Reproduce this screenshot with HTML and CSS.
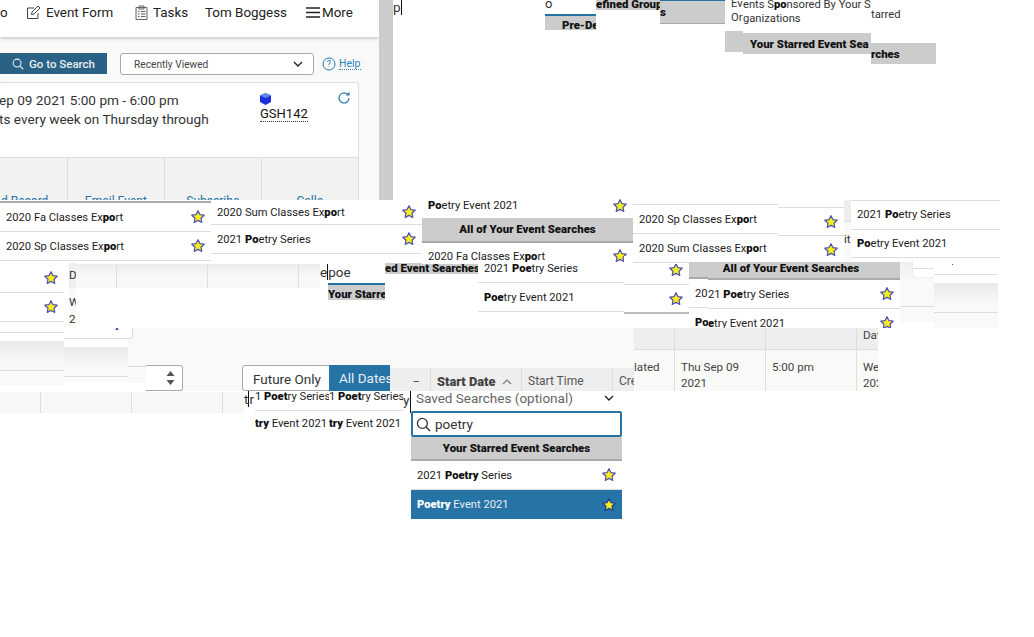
FILE: index.html
```html
<!DOCTYPE html>
<html lang="en">
<head>
<meta charset="utf-8">
<title>Event search</title>
<link rel="stylesheet" href="styles.css">
</head>
<body>
<svg class="defs" width="0" height="0" aria-hidden="true">
  <symbol id="star" viewBox="0 0 14 14"><polygon class="star-shape" points="7,0.7 8.9,4.6 13.2,5.2 10,8.2 10.8,12.5 7,10.4 3.2,12.5 4,8.2 0.8,5.2 5.1,4.6"/></symbol>
  <symbol id="search" viewBox="0 0 16 16"><circle cx="6.8" cy="6.8" r="5.3" fill="none" stroke="currentColor" stroke-width="1.4"/><path d="M10.7 10.7L15 15" stroke="currentColor" stroke-width="1.5" fill="none"/></symbol>
  <symbol id="chev" viewBox="0 0 10 6"><path d="M1 1l4 4 4-4" fill="none" stroke="currentColor" stroke-width="1.4"/></symbol>
</svg>

<div class="frag f-main">
  <header class="topbar">
    <span class="nav nav-cut">o</span>
    <span class="nav nav-form">
      <svg class="ico-nav" viewBox="0 0 15 15"><path d="M12 8v5.500H1.500V3H8M5.500 9.500l.5-2.500L12 1l2 2-6 6z" fill="none" stroke="#444" stroke-width="1"/></svg>
      Event Form</span>
    <span class="nav nav-tasks">
      <svg class="ico-nav ico-task" viewBox="0 0 13 15"><path d="M1 2.500h11v12H1zM4 1h5v3H4z" fill="#f4f4f4" stroke="#666" stroke-width="1"/><path d="M3 6.500h1.500M6 6.500h4.500M3 9h1.500M6 9h4.500M3 11.500h1.500M6 11.500h4.500" stroke="#666" stroke-width="1"/></svg>
      Tasks</span>
    <span class="nav nav-user">Tom Boggess</span>
    <span class="nav nav-more">
      <svg class="ico-more" viewBox="0 0 14 11"><path d="M0 1h14M0 5.500h14M0 10h14" stroke="#222" stroke-width="1.400"/></svg>
      More</span>
  </header>
  <div class="toolbar">
    <button class="go-btn"><svg class="ico-go"><use href="#search"/></svg>Go to Search</button>
    <div class="recent"><span>Recently Viewed</span><svg class="ico-chev"><use href="#chev"/></svg></div>
    <svg class="ico-help" viewBox="0 0 14 14"><circle cx="7" cy="7" r="6" fill="none" stroke="#2673a5" stroke-width="1"/><text x="7" y="10.300" text-anchor="middle" class="help-q">?</text></svg>
    <a class="help">Help</a>
  </div>
  <section class="card">
    <div class="card-body">
      <div class="card-text">
        <div>ep 09 2021 5:00 pm - 6:00 pm</div>
        <div>ts every week on Thursday through</div>
      </div>
      <div class="card-loc">
        <svg class="ico-cube" viewBox="0 0 11 12"><path d="M5.500 0L11 2.500v6.500L5.500 12 0 9V2.500z" fill="#1a2fd6"/><path d="M0 2.500L5.500 5 11 2.500 5.500 0z" fill="#5d8cf0"/></svg>
        <span class="gsh">GSH142</span>
      </div>
      <svg class="ico-refresh" viewBox="0 0 14 14"><path d="M12 7a5 5 0 1 1-1.600-3.700" fill="none" stroke="#2673a5" stroke-width="1.200"/><path d="M12.500 0.800v3.700H8.800z" fill="#2673a5"/></svg>
    </div>
    <div class="card-foot">
      <div class="fc fc1"><span>d Record</span></div>
      <div class="fc fc2"><span>Email Event</span></div>
      <div class="fc fc3"><span>Subscribe</span></div>
      <div class="fc fc4"><span>Calle</span></div>
    </div>
  </section>
</div>
<div class="frag f-strip"></div>
<div class="frag f-p"><span class="caret-text">p</span></div>

<div class="frag f-t1"><div class="t-o">o</div><div class="t-head">Pre-De</div></div>
<div class="frag f-t2 gray-band"><b>efined Group</b></div>
<div class="frag f-t3 gray-band"><b>s</b></div>
<div class="frag f-t4"><div class="t4-a">ents S<b>po</b>nsored By Your St</div><div class="t4-b">ganizations</div></div>
<div class="frag f-t4c"><div class="t4-a">Ev</div><div class="t4-b">Or</div></div>
<div class="frag f-t5"></div>
<div class="frag f-t6 gray-band"><b>Your Starred Event Sea</b></div>
<div class="frag f-t7 gray-band"><b>rches</b></div>
<div class="frag f-t8">tarred</div>

<div class="frag f-table-mid"></div>

<div class="frag f-l3">
  <div class="row"><svg class="star"><use href="#star"/></svg></div>
  <div class="row"><svg class="star"><use href="#star"/></svg></div>
  <div class="row row-thin"></div>
</div>
<div class="frag f-lshade1"></div>
<div class="frag f-lshade2"></div>
<div class="frag f-da">Da</div>
<div class="frag f-we"><div>We</div><div>20</div></div>
<div class="frag f-tback"><div class="tb tb1"></div><div class="tb tb2"></div><div class="tb tb3"></div></div>
<div class="frag f-white1"></div>
<div class="frag f-menu-edge"></div>
<div class="frag f-tip"><svg class="star"><use href="#star"/></svg></div>

<div class="frag f-l1">
  <div class="row"><span>2020 Fa Classes Ex<b>po</b>rt</span><svg class="star"><use href="#star"/></svg></div>
  <div class="row"><span>2020 Sp Classes Ex<b>po</b>rt</span><svg class="star"><use href="#star"/></svg></div>
</div>
<div class="frag f-l2">
  <div class="row r-s"><span>2020 Sum Classes Ex<b>po</b>rt</span><svg class="star"><use href="#star"/></svg></div>
  <div class="row"><span>2021 <b>Po</b>etry Series</span><svg class="star"><use href="#star"/></svg></div>
</div>
<div class="frag f-epoe"><span class="caret-mid">e</span><span class="caret-bar">poe</span></div>
<div class="frag f-ys"><div class="head-strip"><b>Your Starre</b></div></div>
<div class="frag f-ed gray-band"><b>ed Event Searches</b></div>

<div class="frag f-l4">
  <div class="row r-s"><span><b>Po</b>etry Event 2021</span><svg class="star"><use href="#star"/></svg></div>
  <div class="list-head">All of Your Event Searches</div>
  <div class="row row-free"><span>2020 Fa Classes Ex<b>po</b>rt</span><svg class="star"><use href="#star"/></svg></div>
</div>
<div class="frag f-l5">
  <div class="row"><svg class="star"><use href="#star"/></svg></div>
  <div class="row"><svg class="star"><use href="#star"/></svg></div>
</div>
<div class="frag f-l6">
  <div class="row row-first"><span>2021 <b>Poe</b>try Series</span></div>
  <div class="row"><span><b>Poe</b>try Event 2021</span></div>
</div>
<div class="frag f-l7">
  <div class="row"><span>2020 Sp Classes Ex<b>po</b>rt</span></div>
  <div class="row"><span>2020 Sum Classes Ex<b>po</b>rt</span></div>
</div>
<div class="frag f-l8">
  <div class="row"><svg class="star"><use href="#star"/></svg></div>
  <div class="row"><svg class="star"><use href="#star"/></svg></div>
</div>
<div class="frag f-l9"><span class="it">it</span></div>
<div class="frag f-r-shade2"></div>
<div class="frag f-r-card"><div class="r-card-line"></div></div>
<div class="frag f-r-shade"></div>
<div class="frag f-l10"><span class="blue-dot"></span></div>
<div class="frag f-l11">
  <div class="row"><span>2021 <b>Po</b>etry Series</span></div>
  <div class="row"><span><b>Po</b>etry Event 2021</span></div>
</div>
<div class="frag f-l12">
  <div class="list-head head-a"></div>
  <div class="row"><span>20</span></div>
  <div class="row"><span><b>Po</b></span></div>
</div>
<div class="frag f-l13">
  <div class="list-head">All of Your Event Searches</div>
  <div class="row"><span>21 <b>Poe</b>try Series</span><svg class="star"><use href="#star"/></svg></div>
  <div class="row"><span><b>e</b>try Event 2021</span><svg class="star"><use href="#star"/></svg></div>
</div>

<div class="frag f-table-r">
  <div class="tr-head">
    <div class="c c0"></div><div class="c c1"></div><div class="c c2"></div><div class="c c3">Dat</div>
  </div>
  <div class="tr-row">
    <div class="c c0">lated</div><div class="c c1">Thu Sep 09<br>2021</div><div class="c c2">5:00 pm</div><div class="c c3">Wed<br>202</div>
  </div>
</div>
<div class="frag f-table-h">
  <div class="th th0">_</div><div class="th th1"><b>Start Date</b><svg class="ico-sort" viewBox="0 0 10 6"><path d="M1 5l4-4 4 4" fill="none" stroke="#888" stroke-width="1.400"/></svg></div><div class="th th2">Start Time</div><div class="th th3">Cre</div>
</div>
<div class="frag f-toggle"><div class="seg seg-off">Future Only</div><div class="seg seg-on">All Dates</div></div>
<div class="frag f-w2"></div>
<div class="frag f-select">
  <svg class="ico-ud" viewBox="0 0 10 16"><path d="M5 1l4 5H1zM5 15l4-5H1z" fill="#555"/></svg>
</div>
<div class="frag f-bottom-l"><div class="bc b1"></div><div class="bc b2"></div><div class="bc b3"></div></div>

<div class="frag f-ps1"><span class="caret-mid">t</span><span class="caret-bar">r</span></div>
<div class="frag f-ps2"><div class="ps-a">1 <b>Poet</b>ry Series</div><div class="ps-b"><b>try</b> Event 2021</div></div>
<div class="frag f-ps3"><div class="ps-a">1 <b>Poet</b>ry Series</div><div class="ps-b"><b>try</b> Event 2021</div></div>
<div class="frag f-ps4">y</div>

<div class="frag f-saved">
  <div class="saved-top"><span>Saved Searches (optional)</span><svg class="ico-chev"><use href="#chev"/></svg></div>
  <div class="saved-input"><svg class="ico-s"><use href="#search"/></svg><span>poetry</span></div>
  <div class="list-head head-tall">Your Starred Event Searches</div>
  <div class="row row-tall"><span>2021 <b>Poetry</b> Series</span><svg class="star"><use href="#star"/></svg></div>
  <div class="row row-tall row-sel"><span><b>Poetry</b> Event 2021</span><svg class="star"><use href="#star"/></svg></div>
</div>
</body>
</html>
```

FILE: styles.css
```css
* { box-sizing: border-box; }
html, body { margin: 0; padding: 0; width: 1034px; height: 637px; overflow: hidden; background: #fff; }
body { position: relative; font-family: Roboto, "Liberation Sans", sans-serif; color: #333; font-size: 12px; }
.defs { position: absolute; }
b { font-weight: 900; color: #111; }
.frag { position: absolute; overflow: hidden; }
.star-shape { fill: #f7ee1a; stroke: var(--star-stroke, #5050b8); stroke-width: 1.2; stroke-linejoin: round; }

.f-main { left: 0; top: 0; width: 379px; height: 200px; background: #f9f9f8; }
.topbar { position: relative; height: 37px; background: #fff; box-shadow: 0 1px 4px rgba(0,0,0,.25); font-size: 13.400px; color: #222; }
.nav { position: absolute; top: 4px; display: flex; align-items: center; gap: 5px; white-space: nowrap; height: 16px; }
.nav-cut { left: 0; }
.nav-form { left: 26px; }
.nav-tasks { left: 135px; }
.nav-user { left: 205px; }
.nav-more { left: 306px; gap: 2px; }
.ico-nav { width: 15px; height: 15px; flex: none; }
.ico-task { width: 13px; }
.ico-more { width: 14px; height: 11px; }
.toolbar { position: relative; height: 45px; }
.go-btn { position: absolute; left: 0; top: 16px; width: 107px; height: 21px; padding: 0 0 0 12px; border: 0; background: #2a6285; color: #e8eef2; font: 500 11.500px Roboto, sans-serif; display: flex; align-items: center; gap: 5px; }
.ico-go { width: 12px; height: 12px; }
.recent { position: absolute; left: 120px; top: 16px; width: 194px; height: 22px; border: 1px solid #aaa; border-radius: 3px; background: #fff; padding: 0 10px 0 13px; display: flex; justify-content: space-between; align-items: center; font-size: 10.200px; color: #444; }
.ico-chev { width: 10px; height: 6px; color: #222; }
.ico-help { position: absolute; left: 322px; top: 20px; width: 14px; height: 14px; }
.help-q { font-size: 9px; fill: #2673a5; }
.help { position: absolute; left: 339px; top: 21px; font-size: 10.500px; color: #2f86bd; border-bottom: 1px dotted #2f86bd; line-height: 11px; }
.card { position: absolute; left: -2px; top: 82px; width: 361px; height: 130px; border: 1px solid #ddd; border-radius: 3px; background: #fff; }
.card-body { position: relative; height: 74px; padding: 8px 0 0 0; }
.card-text { font-size: 13.600px; line-height: 19px; color: #333; white-space: nowrap; }
.card-loc { position: absolute; left: 261px; top: 10px; display: flex; flex-direction: column; align-items: flex-start; gap: 1px; font-size: 13px; color: #111; }
.ico-cube { width: 11px; height: 12px; }
.gsh { border-bottom: 1px dotted #333; line-height: 15px; }
.ico-refresh { position: absolute; left: 338px; top: 8px; width: 14px; height: 14px; }
.card-foot { height: 43px; background: #f2f2f2; border-top: 1px solid #ddd; display: flex; }
.fc { height: 43px; border-right: 1px solid #ddd; text-align: center; font-size: 12px; color: #2673a5; padding-top: 36px; white-space: nowrap; }
.fc1 { width: 69px; text-align: left; padding-left: 2px; }
.fc2 { width: 98px; }
.fc3 { width: 97px; }
.fc4 { width: 97px; border: 0; }

.f-strip { left: 379px; top: 0; width: 14px; height: 200px; background: #ccc; }
.f-p { left: 393px; top: 0; width: 10px; height: 17px; font-size: 13.500px; line-height: 14px; }
.caret-text { display: inline-block; border-right: 1px solid #111; height: 15px; }

.gray-band { background: #ccc; font-size: 11.400px; text-align: left; white-space: nowrap; }
.f-t1 { left: 545px; top: 0; width: 51px; height: 30px; font-size: 13px; }
.t-o { height: 14px; line-height: 8px; background: #fff; }
.t-head { height: 16px; background: #ccc; border-top: 2px solid #2673a5; padding-left: 17px; font-weight: 900; font-size: 11.400px; line-height: 18px; color: #111; white-space: nowrap; }
.f-t2 { left: 596px; top: 0; width: 64px; height: 10px; line-height: 9px; }
.f-t3 { left: 660px; top: 0; width: 65px; height: 24px; border-top: 1px solid #2673a5; border-bottom: 1px solid #aaa; line-height: 22px; }
.f-t4 { left: 743px; top: 0; width: 128px; height: 31px; font-size: 11.200px; line-height: 14px; background: #fff; white-space: nowrap; }
.f-t4c { left: 725px; top: 0; width: 18px; height: 31px; padding-left: 6px; font-size: 11.200px; line-height: 14px; background: #fff; white-space: nowrap; }
.t4-a { margin-top: -2px; }
.t4-b { margin-top: 0; }
.f-t4c .t4-a { margin-top: -3px; }
.f-t5 { left: 725px; top: 31px; width: 18px; height: 21px; background: #ccc; }
.f-t6 { left: 743px; top: 33px; width: 128px; height: 21px; padding-left: 7px; line-height: 23px; }
.f-t7 { left: 871px; top: 43px; width: 65px; height: 21px; line-height: 23px; }
.f-t8 { left: 871px; top: 7px; width: 30px; height: 15px; font-size: 11.200px; line-height: 15px; }

.row { display: flex; align-items: center; justify-content: space-between; height: 29px; padding: 0 6px 0 6px; border-bottom: 1px solid #ddd; font-size: 11.200px; color: #222; background: #fff; white-space: nowrap; }
.star { width: 14px; height: 14px; flex: none; margin-left: auto; }
.r-s { height: 25px; }
.list-head { height: 25px; background: #ccc; border-bottom: 2px solid #aaa; text-align: center; font-weight: 900; font-size: 11.400px; line-height: 23px; color: #111; white-space: nowrap; }

.f-l1 { left: 0; top: 201px; width: 211px; height: 60px; border-top: 2px solid #aaa; background: #fff; }
.f-l2 { left: 211px; top: 200px; width: 211px; height: 54px; background: #fff; }
.f-l3 { left: 0; top: 264px; width: 64px; height: 70px; }
.row-thin { height: 11px; }
.f-lshade1 { left: 0; top: 333px; width: 64px; height: 59px; background: linear-gradient(#fff 0 8px, #e9e9e9 8px, #f9f9f8 30px, #f9f9f8 37px, #ddd 37px, #ddd 38px, #f9f9f8 38px, #f9f9f8 52px, #fff 52px); }
.f-lshade2 { left: 64px; top: 328px; width: 64px; height: 64px; background: linear-gradient(#fff 0 10px, #ddd 10px, #ddd 11px, #fff 11px, #fff 19px, #e9e9e9 19px, #f9f9f8 40px, #f9f9f8 48px, #ddd 48px, #ddd 49px, #f9f9f8 49px, #f9f9f8 54px, #fff 54px); }
.f-da { left: 69px; top: 263px; width: 7px; height: 25px; background: #efefef; font-size: 11.600px; line-height: 24px; }
.f-we { left: 69px; top: 288px; width: 7px; height: 40px; background: #f9f9f8; font-size: 11.600px; line-height: 17px; padding-top: 6px; }
.f-tback { left: 76px; top: 264px; width: 244px; height: 24px; background: linear-gradient(#ececec, #f8f8f7 12px); }
.tb { position: absolute; top: 0; width: 1px; height: 24px; background: #ddd; }
.tb1 { left: 40px; }
.tb2 { left: 131px; }
.tb3 { left: 222px; }
.f-white1 { left: 76px; top: 288px; width: 252px; height: 40px; background: #fff; }
.f-menu-edge { left: 128px; top: 328px; width: 5px; height: 11px; background: #fff; border-right: 1px solid #ddd; border-bottom: 1px solid #ddd; border-radius: 0 0 3px 0; }
.f-tip { left: 110px; top: 328px; width: 14px; height: 2px; }
.f-tip .star { display: block; margin-top: -1px; }
.f-table-mid { left: 128px; top: 328px; width: 506px; height: 63px; background: #f9f9f8; }

.f-epoe { left: 320px; top: 264px; width: 65px; height: 21px; background: #fff; font-size: 13.500px; line-height: 14px; padding-top: 1px; }
.caret-bar { border-left: 1px solid #111; }
.f-ys { left: 328px; top: 283px; width: 57px; height: 17px; background: #ccc; border-top: 2px solid #2673a5; font-size: 11.400px; line-height: 18px; white-space: nowrap; }
.f-ed { left: 385px; top: 263px; width: 93px; height: 11px; line-height: 11px; }

.f-l4 { left: 422px; top: 193px; width: 211px; height: 71px; background: #fff; }
.f-l4 .row { border: 0; }
.f-l4 .r-s { height: 25px; }
.f-l4 .row-free { height: 26px; }
.f-l5 { left: 624px; top: 256px; width: 65px; height: 60px; }
.f-l5 .row:last-child { border-bottom: 2px solid #bbb; }
.f-l6 { left: 478px; top: 264px; width: 146px; height: 50px; background: #fff; }
.f-l6 .row-first { height: 19px; padding-bottom: 9px; }
.f-l7 { left: 633px; top: 204px; width: 146px; height: 60px; background: #fff; border-top: 1px solid #ddd; }
.f-l8 { left: 778px; top: 207px; width: 66px; height: 56px; background: #fff; border-top: 1px solid #ddd; }
.f-l8 .row { height: 28px; justify-content: flex-end; }
.f-l9 { left: 844px; top: 200px; width: 7px; height: 64px; background: linear-gradient(#eee 0 21px, #ddd 21px, #ddd 22px, #f9f9f8 22px); font-size: 11.600px; line-height: 14px; }
.it { display: block; margin-top: 32px; }
.f-r-shade2 { left: 900px; top: 262px; width: 34px; height: 60px; background: linear-gradient(#f0f0f0, #f9f9f8 20px, #f9f9f8 44px, #ddd 44px, #ddd 45px, #f9f9f8 45px); }
.f-r-card { left: 913px; top: 258px; width: 21px; height: 19px; background: #fff; border-radius: 0 0 0 3px; box-shadow: 0 0 1px #bbb; }
.r-card-line { height: 1px; margin-top: 10px; background: #ddd; }
.f-r-shade { left: 934px; top: 274px; width: 64px; height: 54px; background: linear-gradient(#ddd 0 1px, #fff 1px, #fff 9px, #e9e9e9 9px, #f9f9f8 30px, #f9f9f8 38px, #ddd 38px, #ddd 39px, #f9f9f8 39px); }
.f-l10 { left: 934px; top: 257px; width: 66px; height: 17px; background: #fff; }
.blue-dot { position: absolute; left: 18px; top: 7px; width: 1px; height: 1px; background: #2673a5; }
.f-l11 { left: 851px; top: 200px; width: 149px; height: 58px; background: #fff; border-top: 1px solid #ddd; }
.f-l11 .row { height: 28.500px; }
.f-l12 { left: 689px; top: 262px; width: 211px; height: 66px; background: #fff; }
.f-l12 .list-head { height: 17px; }
.f-l13 { left: 708px; top: 264px; width: 192px; height: 64px; background: #fff; }
.f-l13 .list-head { height: 16px; line-height: 9px; text-indent: -26px; }
.f-l13 .row { padding-left: 0; height: 29px; }

.f-table-r { left: 634px; top: 328px; width: 244px; height: 63px; background: #f9f9f8; font-size: 11.600px; color: #444; }
.tr-head, .tr-row { display: flex; }
.tr-head { height: 22px; background: #eee; border-bottom: 1px solid #ddd; }
.tr-row { height: 41px; line-height: 16px; }
.c { padding: 9px 0 0 6px; border-right: 1px solid #ddd; overflow: hidden; white-space: nowrap; }
.c0 { width: 41px; padding-left: 0; }
.c1 { width: 91px; }
.c2 { width: 91px; }
.c3 { width: 21px; border: 0; }
.tr-head .c { padding-top: 0; line-height: 12px; padding-top: 1px; }
.f-table-h { left: 390px; top: 368px; width: 244px; height: 23px; background: #eee; display: flex; font-size: 12px; line-height: 27px; color: #555; }
.th { border-right: 1px solid #ddd; padding-left: 6px; white-space: nowrap; }
.th0 { width: 41px; text-align: right; padding-right: 11px; line-height: 18px; }
.th1 { width: 91px; display: flex; align-items: center; gap: 7px; padding-top: 4px; font-size: 12.800px; }
.th1 b { color: #444; }
.th2 { width: 91px; }
.th3 { width: 21px; border: 0; overflow: hidden; }
.ico-sort { width: 10px; height: 6px; }
.f-toggle { left: 242px; top: 365px; width: 148px; height: 26px; display: flex; font-size: 13.500px; border-radius: 3px 0 0 3px; }
.seg { height: 26px; line-height: 26px; white-space: nowrap; }
.seg-off { width: 87px; background: #fff; border: 1px solid #aaa; border-right: 0; border-radius: 3px 0 0 3px; padding-left: 10px; color: #333; }
.seg-on { width: 61px; background: #2673a5; color: #e6eef4; padding-left: 10px; overflow: hidden; }
.f-w2 { left: 128px; top: 366px; width: 18px; height: 25px; background: linear-gradient(#ddd 0 1px, #f9f9f8 1px, #f9f9f8 17px, #fff 17px); }
.f-select { left: 146px; top: 365px; width: 37px; height: 26px; background: #fff; border: 1px solid #aaa; border-left: 0; border-radius: 0 3px 3px 0; padding: 4px 0 0 19px; }
.ico-ud { width: 11px; height: 16px; display: block; }
.f-bottom-l { left: 0; top: 392px; width: 244px; height: 21px; display: flex; background: #f7f7f6; }
.bc { height: 21px; border-right: 1px solid #ddd; }
.b1 { width: 41px; }
.b2 { width: 91px; }
.b3 { width: 91px; }

.f-ps1 { left: 244px; top: 391px; width: 11px; height: 22px; font-size: 13.500px; line-height: 14px; background: #fff; padding-top: 1px; }
.f-ps2, .f-ps3 { top: 391px; height: 46px; background: #fff; white-space: nowrap; font-size: 11.200px; color: #222; }
.f-ps2 { left: 255px; width: 74px; }
.f-ps3 { left: 329px; width: 74px; }
.ps-a { height: 20px; line-height: 11px; border-bottom: 1px solid #ddd; }
.ps-b { line-height: 26px; }
.f-ps4 { left: 403px; top: 391px; width: 8px; height: 22px; font-size: 13.500px; line-height: 18px; border-right: 1px solid #111; background: #fff; }

.f-saved { left: 411px; top: 391px; width: 211px; height: 128px; background: #fff; }
.saved-top { height: 20px; padding: 0 8px 6px 5px; display: flex; justify-content: space-between; align-items: center; font-size: 13.500px; color: #666; }
.saved-input { height: 26px; border: 2px solid #2673a5; border-radius: 2px; display: flex; align-items: center; gap: 4px; padding-left: 3px; font-size: 13.500px; color: #333; }
.ico-s { width: 15px; height: 15px; color: #333; }
.head-tall { height: 24px; line-height: 22px; }
.row-tall { height: 29px; }
.row-sel { background: #2673a5; color: #e8eff5; border-bottom: 0; height: 29px; --star-stroke: #1c3f9a; }
.row-sel b { color: #fff; }
```
